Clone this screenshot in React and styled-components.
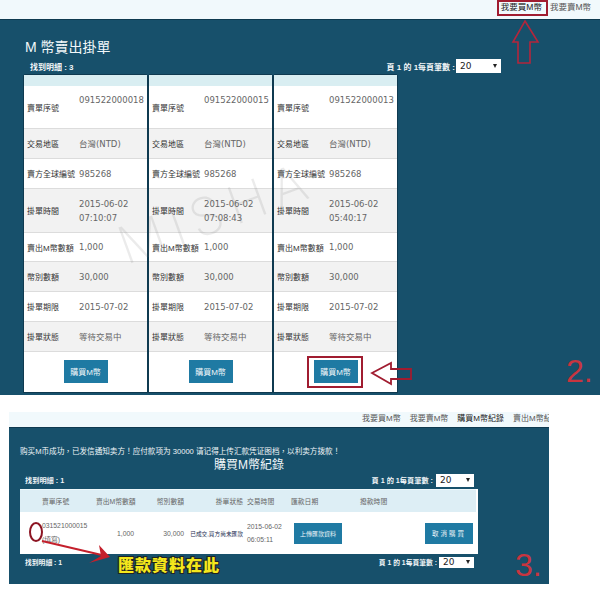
import styled, { createGlobalStyle } from 'styled-components'

const CJK = `"Liberation Sans", "Noto Sans CJK TC", sans-serif`
const VALUE = `"DejaVu Sans", "Noto Sans CJK TC", sans-serif`

const listings = [
  { id: '091522000018', time: ['2015-06-02', '07:10:07'] },
  { id: '091522000015', time: ['2015-06-02', '07:08:43'] },
  { id: '091522000013', time: ['2015-06-02', '05:40:17'] },
]

const GlobalStyle = createGlobalStyle`
  html, body {
    margin: 0;
    background: #fff;
  }
  * { box-sizing: border-box; }
`

const Page = styled.div`
  position: relative;
  width: 600px;
  height: 589px;
  overflow: hidden;
  background: #fff;
  font-family: ${CJK};
`

const TopNav = styled.div`
  height: 19px;
  background: #f1f9fc;
  display: flex;
  justify-content: flex-end;
  gap: 8px;
  padding: 2px 9px 0 0;
`

const NavItem = styled.span`
  font-size: ${(p) => p.$size || 8}px;
  line-height: 11px;
  white-space: nowrap;
  flex-shrink: 0;
  color: ${(p) => (p.$active ? '#222' : '#555')};
`

const Panel = styled.div`
  height: 376px;
  background: #17506b;
  border-top: 1px solid #0f3a50;
  padding: 17px 0 0 24px;
`

const Title = styled.h1`
  margin: 0 0 0 1px;
  font-size: 14px;
  line-height: 20px;
  font-weight: 400;
  color: #f2f7f9;
`

const MetaRow = styled.div`
  width: ${(p) => p.$width}px;
  height: ${(p) => p.$height}px;
  display: flex;
  align-items: center;
  justify-content: space-between;
  padding: 0 0 0 ${(p) => p.$left}px;
  color: #f2f6f8;
  font-size: ${(p) => p.$size}px;
  font-weight: 700;
`

const PageSize = styled.div`
  display: flex;
  align-items: center;
  gap: ${(p) => p.$gap}px;
`

const SelectBox = styled.div`
  width: ${(p) => p.$width}px;
  height: ${(p) => p.$height}px;
  background: #fff;
  color: #222;
  font-size: 9px;
  font-weight: 400;
  font-family: ${VALUE};
  display: flex;
  align-items: center;
  justify-content: space-between;
  padding: 0 4px;

  &::after {
    content: '';
    border-left: 2.5px solid transparent;
    border-right: 2.5px solid transparent;
    border-top: 4px solid #222;
  }
`

const Cards = styled.div`
  display: flex;
  gap: 2px;
`

const Card = styled.div`
  width: 123px;
  height: 317px;
  background: #fff;
  border-radius: 2px 2px 0 0;
  box-shadow: 0 0 0 1px #0f3a50;
  display: flex;
  flex-direction: column;
`

const CardHead = styled.div`
  height: 11px;
  background: #d9eef2;
`

const Row = styled.div`
  height: ${(p) => p.$height}px;
  display: grid;
  grid-template-columns: 52px 1fr;
  align-items: center;
  padding-left: 3px;
  background: ${(p) => (p.$shade ? '#f2f2f2' : '#fff')};
  border-bottom: 1px solid #dcdcdc;
  font-size: 8px;
  color: #333;
`

const Label = styled.span`
  white-space: nowrap;
`

const Value = styled.div`
  font-family: ${VALUE};
  font-size: 8.5px;
  line-height: 14px;
  color: #666;
  white-space: nowrap;
  align-self: ${(p) => (p.$top ? 'start' : 'center')};
  padding-top: ${(p) => (p.$top ? '7px' : 0)};
`

const CardFoot = styled.div`
  flex: 1;
  display: flex;
  justify-content: center;
  padding-top: 8px;
`

const BlueButton = styled.button`
  width: ${(p) => p.$width || 44}px;
  height: ${(p) => p.$height || 23}px;
  border: 0;
  padding: 0;
  background: #1f7aa3;
  color: #f0f7fa;
  font-family: ${CJK};
  font-size: ${(p) => p.$size || 8}px;
  letter-spacing: ${(p) => p.$spacing || 0}px;
`

const Gap = styled.div`
  height: 17px;
`

const Lower = styled.div`
  width: 540px;
  margin-left: 9px;
`

const LowerNav = styled.div`
  height: 15px;
  background: #f1f9fc;
  display: flex;
  gap: 9px;
  padding: 1px 0 0 353px;
  overflow: hidden;
`

const LowerPanel = styled.div`
  height: 157px;
  background: #17506b;
  border-top: 1px solid #0f3a50;
  padding: 18px 0 0 11px;
`

const Notice = styled.div`
  font-size: 7.6px;
  line-height: 11px;
  color: #f0f5f7;
  white-space: nowrap;
`

const LowerTitle = styled.h2`
  margin: 1px 0 0;
  width: 458px;
  text-align: center;
  font-size: 12px;
  line-height: 15px;
  font-weight: 400;
  color: #f2f7f9;
`

const RecordTable = styled.div`
  width: 458px;
  margin-top: 2px;
  height: 65px;
  background: #fff;
  font-size: 6.8px;
  color: #666;
`

const RecordColumns = styled.div`
  display: grid;
  grid-template-columns: 22px 54px 38px 50px 59px 48px 69px 65px 48px;
  align-items: center;
`

const RecordHead = styled(RecordColumns)`
  height: 23px;
  background: #ddeef5;
  margin-right: 2px;
  border-top: 1px solid #eef7fa;
`

const RecordRow = styled(RecordColumns)`
  height: 42px;
`

const Cell = styled.span`
  text-align: ${(p) => p.$align || 'left'};
  padding-left: ${(p) => p.$pad || 0}px;
  white-space: nowrap;
  font-size: ${(p) => (p.$size ? `${p.$size}px` : 'inherit')};
  color: ${(p) => p.$color || 'inherit'};
  line-height: ${(p) => p.$line || 'inherit'};
`

const Mark = styled.div`
  position: absolute;
  left: ${(p) => p.$x}px;
  top: ${(p) => p.$y}px;
  font-family: "Liberation Sans", sans-serif;
`

const StepNumber = styled(Mark)`
  font-size: 32px;
  line-height: 1;
  color: #c8353f;
`

const HighlightBox = styled(Mark)`
  width: ${(p) => p.$w}px;
  height: ${(p) => p.$h}px;
  border: 2px solid #a01c30;
`

const Callout = styled(Mark)`
  font-family: "Noto Sans CJK TC", sans-serif;
  font-size: 16px;
  line-height: 18px;
  font-weight: 900;
  color: #f4e81c;
  letter-spacing: 1px;
  text-shadow: 1px 1px 0 #222, -1px 1px 0 #222, 1px -1px 0 #222, -1px -1px 0 #222;
  white-space: nowrap;
`

const Watermark = styled(Mark)`
  font-family: Inter, sans-serif;
  font-size: 52px;
  font-weight: 200;
  line-height: 1;
  color: rgba(110, 110, 110, 0.14);
  letter-spacing: 8px;
  transform: rotate(-20deg);
  transform-origin: left center;
  white-space: nowrap;
  pointer-events: none;
`

const Drawing = styled.svg`
  position: absolute;
  left: 0;
  top: 0;
  pointer-events: none;
`

function ListingCard({ item }) {
  return (
    <Card>
      <CardHead />
      <Row $height={43}>
        <Label>賣單序號</Label>
        <Value $top>{item.id}</Value>
      </Row>
      <Row $height={30} $shade>
        <Label>交易地區</Label>
        <Value>台灣(NTD)</Value>
      </Row>
      <Row $height={30}>
        <Label>賣方全球編號</Label>
        <Value>985268</Value>
      </Row>
      <Row $height={44} $shade>
        <Label>掛單時間</Label>
        <Value>{item.time[0]}<br />{item.time[1]}</Value>
      </Row>
      <Row $height={29}>
        <Label>賣出M幣數額</Label>
        <Value>1,000</Value>
      </Row>
      <Row $height={30} $shade>
        <Label>幣別數額</Label>
        <Value>30,000</Value>
      </Row>
      <Row $height={30}>
        <Label>掛單期限</Label>
        <Value>2015-07-02</Value>
      </Row>
      <Row $height={30} $shade>
        <Label>掛單狀態</Label>
        <Value>等待交易中</Value>
      </Row>
      <CardFoot>
        <BlueButton>購買M幣</BlueButton>
      </CardFoot>
    </Card>
  )
}

function App() {
  return (
    <Page>
      <GlobalStyle />
      <TopNav>
        <NavItem $size={8.5} $active>我要買M幣</NavItem>
        <NavItem $size={8.5}>我要賣M幣</NavItem>
      </TopNav>
      <Panel>
        <Title>M 幣賣出掛單</Title>
        <MetaRow $width={477} $height={18} $left={6} $size={8}>
          <span>找到明細 : 3</span>
          <PageSize $gap={1}>
            <span>頁 1 的 1每頁筆數 :</span>
            <SelectBox $width={45} $height={14}>20</SelectBox>
          </PageSize>
        </MetaRow>
        <Cards>
          {listings.map((item) => (
            <ListingCard key={item.id} item={item} />
          ))}
        </Cards>
      </Panel>
      <Gap />
      <Lower>
        <LowerNav>
          <NavItem>我要買M幣</NavItem>
          <NavItem>我要賣M幣</NavItem>
          <NavItem $active>購買M幣紀錄</NavItem>
          <NavItem>賣出M幣紀錄</NavItem>
        </LowerNav>
        <LowerPanel>
          <Notice>购买M币成功，已发信通知卖方！应付款项为 30000 请记得上传汇款凭证图档，以利卖方拨款！</Notice>
          <LowerTitle>購買M幣紀錄</LowerTitle>
          <MetaRow $width={454} $height={14} $left={5} $size={7.2}>
            <span>找到明細 : 1</span>
            <PageSize $gap={3}>
              <span>頁 1 的 1每頁筆數 :</span>
              <SelectBox $width={38} $height={13}>20</SelectBox>
            </PageSize>
          </MetaRow>
          <RecordTable>
            <RecordHead>
              <span />
              <Cell>賣單序號</Cell>
              <Cell $align="right">賣出M幣數額</Cell>
              <Cell $align="right">幣別數額</Cell>
              <Cell $align="right">掛單狀態</Cell>
              <Cell $pad={4}>交易時間</Cell>
              <Cell>匯款日期</Cell>
              <Cell>撥款時間</Cell>
            </RecordHead>
            <RecordRow>
              <span />
              <Cell $line="14px">031521000015<br />(填寫)</Cell>
              <Cell $align="right">1,000</Cell>
              <Cell $align="right">30,000</Cell>
              <Cell $align="right" $size={5.7} $color="#1d2d50">已成交,買方尚未匯款</Cell>
              <Cell $pad={4} $line="13px">2015-06-02<br />06:05:11</Cell>
              <Cell $pad={3}><BlueButton $width={48} $height={21} $size={6}>上傳匯款資料</BlueButton></Cell>
              <span />
              <Cell><BlueButton $width={48} $height={21} $size={6.5} $spacing={2}>取消購買</BlueButton></Cell>
            </RecordRow>
          </RecordTable>
          <MetaRow $width={454} $height={16} $left={5} $size={6.8}>
            <span>找到明細 : 1</span>
            <PageSize $gap={2}>
              <span>頁 1 的 1每頁筆數 :</span>
              <SelectBox $width={35} $height={11}>20</SelectBox>
            </PageSize>
          </MetaRow>
        </LowerPanel>
      </Lower>

      <Watermark $x={120} $y={222}>MISHA</Watermark>
      <HighlightBox $x={497} $y={0} $w={51} $h={16} />
      <HighlightBox $x={307} $y={356} $w={56} $h={32} />
      <Drawing width="600" height="589" viewBox="0 0 600 589">
        <path d="M525 21 L538 42 L530 42 L530 63 L518 63 L518 42 L513 42 Z" fill="none" stroke="#b3263c" strokeWidth="1.6" />
        <path d="M372 373 L391 363 L391 369 L411 369 L411 379 L391 379 L391 384 Z" fill="none" stroke="#a01c30" strokeWidth="1.8" />
        <ellipse cx="36" cy="532" rx="6" ry="9" fill="none" stroke="#8c1422" strokeWidth="2" />
        <path d="M42 541 L106 556" stroke="#c4202c" strokeWidth="2" />
        <path d="M99 545 L110 557 L89 563 L101 556 Z" fill="#c4202c" />
      </Drawing>
      <Callout $x={118} $y={555}>匯款資料在此</Callout>
      <StepNumber $x={566} $y={355}>2.</StepNumber>
      <StepNumber $x={515} $y={549}>3.</StepNumber>
    </Page>
  )
}

export default App
